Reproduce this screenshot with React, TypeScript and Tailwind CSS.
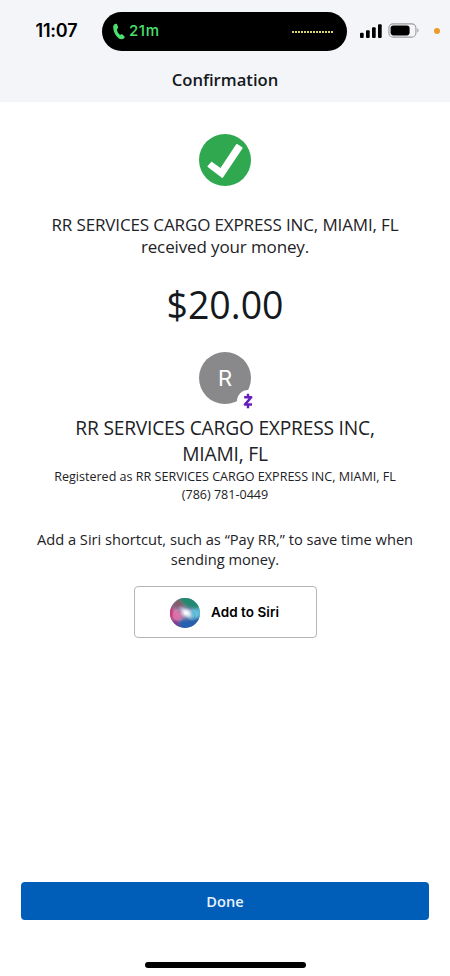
import type { ReactNode } from 'react';

const ISLAND_DOTS = Array.from({ length: 14 }, (_, index) => index);

function PhoneIcon() {
  return (
    <svg aria-hidden="true" viewBox="0 0 12 17" className="h-[17px] w-3" fill="#4be06d">
      <path d="M1.200 1.500C2 .7 3.300.3 3.900 1L5 3.700C5.300 4.600 5 5.100 4.400 5.700 3.900 6.200 3.900 6.700 4.100 7.400 4.500 8.900 5.300 10.300 6.300 11.300 6.800 11.800 7.200 11.800 7.900 11.500 8.600 11.200 9.200 11.200 9.800 11.700L11.300 13.200C12 13.900 11.800 14.700 11.100 15.300 9.600 16.600 7.300 16.600 5.300 15 2.200 12.400.3 8.200.2 4.500.1 3.300.4 2.300 1.200 1.500Z" />
    </svg>
  );
}

function SignalIcon() {
  return (
    <svg aria-hidden="true" viewBox="0 0 22 14" className="h-3.5 w-[22px]" fill="#000">
      <rect x="0" y="8.800" width="3.700" height="5.200" rx="1.100" />
      <rect x="6" y="6.200" width="3.700" height="7.800" rx="1.100" />
      <rect x="12" y="3.200" width="3.700" height="10.800" rx="1.100" />
      <rect x="18" y="0.200" width="3.700" height="13.800" rx="1.100" />
    </svg>
  );
}

function BatteryIcon() {
  return (
    <svg aria-hidden="true" viewBox="0 0 32 15" className="h-[15px] w-8">
      <rect x="0.900" y="0.900" width="27" height="13.200" rx="4.200" fill="none" stroke="#9b9ca0" strokeWidth="1.100" />
      <rect x="2.600" y="2.600" width="19" height="9.800" rx="2.800" fill="#000" />
      <path d="M29.300 5.300c1.600.5 1.600 3.900 0 4.400Z" fill="#9b9ca0" />
    </svg>
  );
}

function StatusBar() {
  return (
    <div className="relative flex h-[61px] items-center">
      <span className="ml-[35.500px] w-[66.500px] font-['Inter',sans-serif] text-[18px] font-semibold tracking-[-0.2px] text-black">
        11:07
      </span>
      <div className="mt-0.5 flex h-[39px] w-[244.500px] items-center rounded-full bg-black pl-[11px] pr-[13.500px]">
        <PhoneIcon />
        <span className="ml-1 font-['Inter',sans-serif] text-[15px] font-medium tracking-[0.600px] text-[#4be06d]">
          21m
        </span>
        <span className="ml-auto flex gap-px">
          {ISLAND_DOTS.map((dot) => (
            <span key={dot} className="h-[2px] w-[2px] bg-[#d9d76a]" />
          ))}
        </span>
      </div>
      <div className="ml-[13.500px] flex items-center">
        <SignalIcon />
        <span className="ml-[6px] flex">
          <BatteryIcon />
        </span>
        <span className="ml-[13.500px] h-1.5 w-1.5 rounded-full bg-[#ee9a2b]" />
      </div>
    </div>
  );
}

function SuccessIcon() {
  return (
    <svg aria-hidden="true" viewBox="0 0 52 52" className="h-[52px] w-[52px]">
      <circle cx="26" cy="26" r="26" fill="#2fa84f" />
      <path
        d="M8.600 32 12.200 28Q12.600 27.600 13.100 28L21.500 34 37.200 10.300Q37.600 9.700 38.200 10.100L43.200 13.300Q43.800 13.800 43.400 14.400L24 43.600Q23.500 44.200 22.900 43.800L8.700 33Q8.200 32.500 8.600 32Z"
        fill="#fff"
      />
    </svg>
  );
}

function ZelleBadge() {
  return (
    <span className="absolute left-[38px] top-[38.500px] flex h-[22px] w-[22px] items-center justify-center rounded-full bg-white">
      <svg aria-hidden="true" viewBox="0 0 10 16" className="h-4 w-2.5" fill="none" stroke="#6420bf">
        <path d="M1.200 4.200H8.200L1.900 11.600H9" strokeWidth="2.500" strokeLinejoin="round" />
        <path d="M5 .8V4M5 12v3.200" strokeWidth="2.400" />
      </svg>
    </span>
  );
}

function SiriIcon() {
  return (
    <svg aria-hidden="true" viewBox="0 0 30 30" className="h-[30px] w-[30px]">
      <defs>
        <clipPath id="siri-clip">
          <circle cx="15" cy="15" r="15" />
        </clipPath>
        <radialGradient id="siri-glow">
          <stop offset="0" stopColor="#fff" />
          <stop offset="0.300" stopColor="#f4f4fc" stopOpacity="0.850" />
          <stop offset="1" stopColor="#c8d8f0" stopOpacity="0" />
        </radialGradient>
        <filter id="siri-blur" x="-50%" y="-50%" width="200%" height="200%">
          <feGaussianBlur stdDeviation="1.400" />
        </filter>
      </defs>
      <g clipPath="url(#siri-clip)">
        <rect width="30" height="30" fill="#7d86ad" />
        <g filter="url(#siri-blur)">
          <path d="M-3 9 3 9 5 14 4 22-4 24Z" fill="#c22f72" />
          <path d="M3 11 9 12 14 17 9 23 3 22Z" fill="#d974a8" />
          <path d="M7-3H24L33 10 25 11 18 9 10 4Z" fill="#22886f" />
          <path d="M23 11 33 10V20L20 20 19 16Z" fill="#5cbcd8" />
          <path d="M11 22 20 21 32 19 27 33H8L5 27Z" fill="#2561ae" />
          <path d="M1 22 8 22 10 32 1 30Z" fill="#7b3a8c" />
          <path d="M1 8 8 0 15 9 8 10Z" fill="#85586a" />
        </g>
        <ellipse cx="16.500" cy="15" rx="7" ry="5.500" fill="url(#siri-glow)" />
        <path d="M9 8 18 13 23 21 19 19 13 15Z" fill="#fff" opacity="0.700" filter="url(#siri-blur)" />
        <circle cx="8.500" cy="17" r="5" fill="none" stroke="#f6a8cf" strokeOpacity="0.300" strokeWidth="0.800" />
        <circle cx="22" cy="17" r="5" fill="none" stroke="#b9e8f6" strokeOpacity="0.300" strokeWidth="0.800" />
      </g>
    </svg>
  );
}

function Line({ children }: { children: ReactNode }) {
  return <span className="block whitespace-nowrap">{children}</span>;
}

export default function App() {
  return (
    <div className="flex h-[976px] w-[450px] flex-col bg-white font-['Open_Sans',sans-serif] text-[#1d2226]">
      <header className="h-[102px] shrink-0 bg-[#f4f5f8]">
        <StatusBar />
        <h1 className="mt-[7px] text-center text-[16.650px] leading-6 font-semibold text-[#14191d]">Confirmation</h1>
      </header>

      <main className="flex flex-1 flex-col items-center text-center">
        <div className="mt-8">
          <SuccessIcon />
        </div>
        <p className="mt-[28px] text-[17px] leading-[22px] tracking-[-0.130px]">
          <Line>RR SERVICES CARGO EXPRESS INC, MIAMI, FL</Line>
          <Line>received your money.</Line>
        </p>
        <p className="mt-[23px] text-[37.500px] leading-[48px] text-[#14191d]">$20.00</p>

        <div className="relative mt-[22.500px] flex h-[52.500px] w-[52px] items-center justify-center rounded-full bg-[#89898b] pt-px font-['Inter',sans-serif] text-[22px] text-white">
          R
          <ZelleBadge />
        </div>
        <h2 className="mt-[11px] text-[19.200px] leading-[25.500px] tracking-[-0.200px]">
          <Line>RR SERVICES CARGO EXPRESS INC,</Line>
          <Line>MIAMI, FL</Line>
        </h2>
        <p className="mt-[2px] text-[12.550px] leading-[18px]">
          <Line>Registered as RR SERVICES CARGO EXPRESS INC, MIAMI, FL</Line>
          <Line>(786) 781-0449</Line>
        </p>
        <p className="mt-[25px] text-[14.670px] leading-[20px]">
          <Line>Add a Siri shortcut, such as “Pay RR,” to save time when</Line>
          <Line>sending money.</Line>
        </p>

        <button
          type="button"
          className="mt-[17px] flex h-[52px] w-[183px] items-center rounded-[4px] border border-[#b5b5b7] pl-[35.500px] pt-px"
        >
          <SiriIcon />
          <span className="ml-[11px] font-['Inter',sans-serif] text-[13.500px] font-semibold tracking-[0.050px] text-black">
            Add to Siri
          </span>
        </button>
      </main>

      <footer className="flex h-[94px] shrink-0 flex-col items-center">
        <button
          type="button"
          className="h-[38px] w-[408px] rounded-[4px] bg-[#005eb8] pt-px text-[14.600px] font-semibold text-[#e8f2fc]"
        >
          Done
        </button>
        <div className="mt-[42px] h-1.5 w-[161px] rounded-full bg-black" />
      </footer>
    </div>
  );
}
